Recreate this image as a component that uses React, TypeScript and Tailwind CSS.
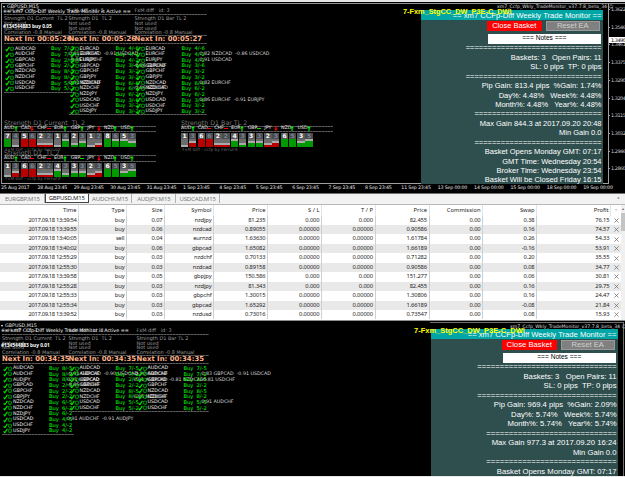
import { clsx } from 'clsx'

type Row = [string, string, string?]

interface Column {
  x: number
  title: string
  next: string
  rows: Row[]
}

const sans = "font-['DejaVu_Sans',sans-serif]"

const topColumns: Column[] = [
  {
    x: 4,
    title: 'Strength D1 Current  TL 2',
    next: 'Next In: 00:05:26',
    rows: [
      ['AUDCAD', '7/-5'],
      ['AUDCHF', '7/-2', '0.81 EURCAD  -0.91 USDCAD'],
      ['GBPCAD', '2/-5', '-0.86 USDCHF'],
      ['GBPCHF', '2/-2'],
      ['NZDCAD', '8/-5'],
      ['NZDCHF', '8/-2'],
      ['USDCAD', '5/-5', '0.91 NZDCHF'],
      ['USDCHF', '5/-2'],
    ],
  },
  {
    x: 68.5,
    title: 'Strength D1  TL 2',
    next: 'Next In: 00:05:26',
    rows: [
      ['EURCAD', '4/-6'],
      ['EURCHF', '4/-2'],
      ['EURJPY', '4/-2'],
      ['GBPCAD', '3/-6', '-0.86 EURCHF'],
      ['GBPCHF', '3/-2'],
      ['GBPJPY', '3/-2'],
      ['NZDCAD', '6/-6'],
      ['NZDCHF', '6/-2', '-0.86 NZDCAD'],
      ['NZDJPY', '6/-2'],
      ['USDCAD', '3/-6'],
      ['USDCHF', '3/-2'],
      ['USDJPY', '3/-2'],
    ],
  },
  {
    x: 134.5,
    title: 'Strength D1 Bar TL 2',
    next: 'Next In: 00:05:27',
    rows: [
      ['EURCAD', '4/-6'],
      ['EURCHF', '4/-2', '0.82 NZDCAD  -0.86 USDCAD'],
      ['EURJPY', '4/-2', '0.91 USDCAD'],
      ['GBPCAD', '3/-6'],
      ['GBPCHF', '3/-2'],
      ['GBPJPY', '3/-2'],
      ['NZDCAD', '6/-6', '0.82 EURCHF'],
      ['NZDCHF', '6/-2'],
      ['NZDJPY', '6/-2'],
      ['USDCAD', '3/-6', '0.86 EURCHF  -0.91 EURJPY'],
      ['USDCHF', '3/-2'],
      ['USDJPY', '3/-2'],
    ],
  },
]

const bottomColumns: Column[] = [
  {
    x: 2,
    title: 'Strength D1 Current  TL 2',
    next: 'Next In: 00:34:35',
    rows: [
      ['AUDCAD', '8/-5'],
      ['AUDCHF', '8/-2', '-0.91 GBPCAD  -0.90 USDCAD'],
      ['AUDJPY', '8/-2', '0.91 USDCAD'],
      ['GBPCAD', '2/-5', '-0.86 USDCHF'],
      ['GBPCHF', '2/-2'],
      ['GBPJPY', '2/-2'],
      ['NZDCAD', '6/-5'],
      ['NZDCHF', '6/-2'],
      ['NZDJPY', '6/-2'],
      ['USDCAD', '4/-5', '0.91 AUDCHF  -0.91 AUDJPY'],
      ['USDCHF', '4/-2'],
      ['USDJPY', '4/-2'],
    ],
  },
  {
    x: 68.5,
    title: 'Strength D1  TL 2',
    next: 'Next In: 00:34:35',
    rows: [
      ['AUDCAD', '7/-5'],
      ['AUDCHF', '7/-2', '-0.90 GBPCAD'],
      ['GBPCAD', '2/-5', '0.91 AUDCAD  -0.81 NZDCAD'],
      ['GBPCHF', '2/-2'],
      ['NZDCAD', '8/-5'],
      ['NZDCHF', '8/-2', '0.85 NZDCHF'],
      ['USDCAD', '5/-5'],
      ['USDCHF', '5/-2'],
    ],
  },
  {
    x: 136.5,
    title: 'Strength D1 Bar TL 2',
    next: 'Next In: 00:34:35',
    rows: [
      ['AUDCAD', '7/-5'],
      ['AUDCHF', '7/-2', '0.83 GBPCAD  -0.91 USDCAD'],
      ['GBPCAD', '2/-5', '-0.81 USDCHF'],
      ['GBPCHF', '2/-2'],
      ['NZDCAD', '8/-5'],
      ['NZDCHF', '8/-2'],
      ['USDCAD', '5/-5', '0.91 AUDCHF'],
      ['USDCHF', '5/-2'],
    ],
  },
]

function Dashes() {
  return <div className="h-px w-full bg-[repeating-linear-gradient(90deg,#5c5c5c_0_2px,#3a3a3a_2px_3px)]" />
}

function BasketColumn({ col }: { col: Column }) {
  return (
    <div
      className={clsx('absolute top-0 w-[72px] whitespace-pre text-[4.95px] leading-none text-[#9a9a9a]', sans)}
      style={{ left: col.x }}
    >
      <div className="h-[6px]">FxM diff   id: 3</div>
      <Dashes />
      <div className="mt-[1px] flex h-[5.4px] items-center">{col.title}</div>
      <div className="flex h-[4.7px] items-center">Not used</div>
      <div className="flex h-[4.5px] items-center">Not used</div>
      <div className="flex h-[4.6px] items-center">Correlation -0.8 Manual</div>
      <Dashes />
      <div className="flex h-[7px] items-center text-[6.9px] font-bold text-[#ffb08a]">{col.next}</div>
      <Dashes />
      <div className="h-[2px]" />
      {col.rows.map(([pair, score, corr]) => (
        <div key={pair} className="flex h-[5.7px] items-center">
          <svg viewBox="0 0 10 6" className="ml-[1px] h-[5.7px] w-[10px] shrink-0" fill="none" stroke="#00e400">
            <path d="M0.4 3.6 1.6 5 4.4 0.8" strokeWidth="1.3" />
            <rect x="5.4" y="1.3" width="3.4" height="3.4" rx="1" strokeWidth="0.7" />
            <path d="M6.5 3.4h1.3" strokeWidth="0.5" />
          </svg>
          <span className="w-[36px] shrink-0 text-[4.75px] text-[#f4f4f4]">{pair}</span>
          <span className="w-[13px] shrink-0 text-[5.2px] text-[#00ff00]">Buy</span>
          <span className="w-[5px] shrink-0 text-[5.2px] text-[#00ff00]">{score}</span>
          {corr && <span className="text-[4.75px] text-[#d8d8d8]">{corr}</span>}
        </div>
      ))}
      <Dashes />
    </div>
  )
}

const currencies = ['AUD', 'CAD', 'CHF', 'EUR', 'GBP', 'JPY', 'NZD', 'USD']

// each currency: [value, bars, previous value, bars], negative bars are drawn red
interface Strength {
  title: string
  values: number[][]
  trend: string
}

const current: Strength = {
  title: 'Strength D1 Current  TL 2',
  values: [
    [7, 4, 4, 0], [5, -4, 6, -4], [2, -1, 2, -1], [1, 0, 4, 3],
    [2, 1, 3, 2], [1, 0, 2, -1], [8, 4, 6, 3], [5, 3, 3, 2],
  ],
  trend: 'UDFUUDUU',
}
const dailyValues = [
  [1, 0, 3, -2], [6, -4, 6, -4], [2, -1, 2, -1], [4, 3, 3, 1],
  [3, 2, 3, 2], [2, -1, 3, -2], [6, 4, 5, 4], [3, 2, 5, 3],
]
const daily: Strength = { title: 'Strength D1  TL 2', values: dailyValues, trend: 'UFFUGDUU' }
const bar: Strength = { title: 'Strength D1 Bar TL 2', values: dailyValues, trend: 'UFFUGDUU' }

function Trend({ kind }: { kind: string }) {
  if (kind === 'F' || kind === 'G') {
    return <span className={clsx('h-[1.4px] w-[4px]', kind === 'F' ? 'bg-[#ff0000]' : 'bg-[#00e000]')} />
  }
  return (
    <svg viewBox="0 0 4 5" className={clsx('h-[5px] w-[4px]', kind === 'D' && 'rotate-180')}>
      <path d="M2 0 4 2.3H2.6V5H1.4V2.3H0Z" fill={kind === 'U' ? '#00f000' : '#ff0000'} />
    </svg>
  )
}

function Cell({ value, bars, dim }: { value: number; bars: number; dim?: boolean }) {
  const lit = Math.abs(bars)
  return (
    <div className="flex w-[7.3px] flex-col bg-[#303030]">
      <div
        className={clsx(
          'flex h-[6px] items-center justify-center text-[6px] font-bold leading-none',
          dim ? 'bg-[#484c50] text-[#7c8490]' : 'bg-[#5a5a5a] text-white',
        )}
      >
        {value}
      </div>
      {[4, 3, 2, 1].map((level) => (
        <div
          key={level}
          className={clsx(
            'h-[2.1px]',
            level === lit + 1 ? 'bg-[#aaaaaa]' : level > lit ? 'bg-[#6c6c6c]' : bars < 0 ? 'bg-[#b80000]' : 'bg-[#009a00]',
          )}
        />
      ))}
    </div>
  )
}

function StrengthMeter({ data, className }: { data: Strength; className: string }) {
  return (
    <div className={clsx('absolute w-[152px] whitespace-pre leading-none', sans, className)}>
      <div className="h-[5.5px] text-[6.3px] text-[#787878]">{data.title}</div>
      <Dashes />
      <div className="flex h-[4.5px] text-[4.7px] text-[#e4e4e4]">
        {currencies.map((c, i) => (
          <div key={c} className="flex w-[16.67px] shrink-0 items-center">
            <span className="w-[9.5px]">{c}</span>
            <Trend kind={data.trend[i]} />
          </div>
        ))}
      </div>
      <Dashes />
      <div className="mt-[1px] flex gap-[1.37px]">
        {data.values.map(([now, nowBars, prev, prevBars], i) => (
          <div key={i} className="flex gap-[0.7px]">
            <Cell value={now} bars={nowBars} />
            <Cell value={prev} bars={prevBars} dim />
          </div>
        ))}
      </div>
      <div className="mt-[0.5px] text-[4.3px] text-[#666]"> FxM Diff - ccfp by FerruFX</div>
    </div>
  )
}

interface MonitorProps {
  gain: string[]
  max: string
  tall?: boolean
}

function Monitor({ gain, max, tall }: MonitorProps) {
  const long = '='.repeat(31)
  const short = '='.repeat(29)
  const lines = [
    long,
    'Baskets: 3   Open Pairs: 11',
    'SL: 0 pips  TP: 0 pips',
    long,
    ...gain,
    short,
    max,
    'Min Gain 0.0',
    short,
    'Basket Opens Monday GMT: 07:17',
  ]
  if (tall) {
    lines.push('GMT Time: Wednesday 20:54', 'Broker Time: Wednesday 23:54', 'Basket Will be Closed Friday 16:15')
  }

  return (
    <div
      className={clsx(
        "flex shrink-0 flex-col overflow-hidden whitespace-pre bg-[#2f4f4f] font-['Liberation_Sans',sans-serif] leading-none text-white",
        tall ? 'h-[174px] w-[182px] text-[7.5px]' : 'h-[149px] w-[187px] text-[7.7px]',
      )}
    >
      <div className="flex h-[9.5px] shrink-0 items-center justify-end bg-[#00a5a5] pr-[1.5px] pt-[2px] text-[7.65px]">
        == xm7 CCFp-Diff Weekly Trade Monitor ==
      </div>
      <div className="mt-[1px] flex shrink-0 justify-end gap-[4px] pr-[3px]">
        <div className="flex h-[10px] w-[54.5px] items-center justify-center bg-[#ff0000]">Close Basket</div>
        <div className="flex h-[10px] w-[54.5px] items-center justify-center border border-[#9a9a9a] bg-[#808080] text-[#d0d0d0]">
          Reset EA
        </div>
      </div>
      <div className="mr-[2px] mt-[3px] flex h-[10px] w-[113.5px] shrink-0 items-center justify-center self-end bg-white text-[6.6px] text-black">
        === Notes ===
      </div>
      <div className="shrink-0 pr-[1.5px]">
        {lines.map((text, i) => (
          <div key={i} className={clsx('flex items-center justify-end', tall ? 'h-[9.43px]' : 'h-[9.5px]')}>
            {text}
          </div>
        ))}
      </div>
    </div>
  )
}

interface ChartLabelsProps {
  ticket: string
  className: string
  eaName: string
  tag: string
}

// Text objects the terminal paints over every chart window
function ChartLabels({ ticket, className, eaName, tag }: ChartLabelsProps) {
  return (
    <>
      <div className={clsx('absolute whitespace-pre text-[4.8px] leading-none text-[#e8e8e8]', sans, className)}>
        <div className="flex h-[4.8px] items-center gap-[2px]">
          <span className="size-0 border-x-[1.5px] border-t-[2px] border-x-transparent border-t-white" />
          GBPUSD,M15
        </div>
        <div className="flex h-[5px] items-center text-white">== xm7 CCfp-Diff Weekly Trade Monitor is Active ==</div>
        <div className="mt-[9.5px] flex h-[5px] items-center font-['Open_Sans',sans-serif] text-[4.8px] font-bold text-white">
          #134544883 buy {ticket}
        </div>
      </div>
      <div className={clsx('absolute whitespace-pre text-[4.65px] leading-none text-[#d8d8d8]', sans, eaName)}>
        xm7_Ccfp_Wkly_TradeMonitor_v37.7.8_beta_34 ☺
      </div>
      <div
        className={clsx(
          "absolute whitespace-pre font-['Liberation_Sans',sans-serif] font-bold leading-none text-[#ffff00]",
          tag,
        )}
      >
        7-Fxm_StgCC_DW_P3E-C_DWl
      </div>
    </>
  )
}

const times = [
  '25 Aug 2017', '28 Aug 23:45', '29 Aug 23:45', '30 Aug 23:45', '31 Aug 23:45', '1 Sep 23:45',
  '4 Sep 23:45', '5 Sep 23:45', '6 Sep 23:45', '7 Sep 23:45', '8 Sep 23:45', '11 Sep 23:45',
  '13 Sep 00:00', '14 Sep 00:00', '15 Sep 00:00', '18 Sep 00:00', '19 Sep 00:00',
]

const prices = ['1.3622', '1.3546', '1.3461', '1.3375', '1.3290', '1.3204', '1.3115', '1.3032', '1.2946', '1.2860']

function TopChart() {
  return (
    <section className="relative flex h-[194px] shrink-0 flex-col overflow-hidden border-b border-[#707070] bg-black">
      <div className="h-[2px] shrink-0 bg-[#e4e6e8]" />
      <div className="ml-px mt-px flex h-[181px] shrink-0 border-l border-t border-[#909090]">
        <div className="relative flex w-[607px] shrink-0 justify-end border-b border-r border-[#a0a0a0] pr-[5px] pt-[6px]">
          <Monitor
            tall
            gain={['Pip Gain: 813.4 pips  %Gain: 1.74%', 'Day%: 4.48%   Week%: 4.48%', 'Month%: 4.48%   Year%: 4.48%']}
            max="Max Gain 844.3 at 2017.09.20 20:48"
          />
        </div>
        <div className={clsx('relative flex flex-col pt-[3px] text-[4.9px] leading-none text-[#d0d0d0]', sans)}>
          {prices.map((p) => (
            <div key={p} className="flex h-[18.6px] gap-[1px]">
              <span className="mt-[2px] h-px w-[1px] bg-[#a0a0a0]" />
              <span className="tracking-[-0.45px]">{p}</span>
            </div>
          ))}
          <div className="absolute left-0 top-[33px] flex h-[6px] w-[18px] items-center bg-white pl-[2px] tracking-[-0.45px] text-black">
            1.3490
          </div>
        </div>
      </div>
      <div className={clsx('flex pl-[1px] pt-[2px] text-[4.7px] leading-none text-[#e0e0e0]', sans)}>
        {times.map((t) => (
          <span key={t} className="w-[36.4px] shrink-0 whitespace-nowrap tracking-[-0.15px]">
            {t}
          </span>
        ))}
      </div>
      <div className="absolute left-0 top-[8px]">
        {topColumns.map((c) => (
          <BasketColumn key={c.x} col={c} />
        ))}
      </div>
      <StrengthMeter data={current} className="left-[4px] top-[120px]" />
      <StrengthMeter data={daily} className="left-[4px] top-[149.5px]" />
      <StrengthMeter data={bar} className="left-[181px] top-[120px]" />
      <ChartLabels
        ticket="0.05"
        className="left-[3px] top-[5px]"
        eaName="left-[497px] top-[4.5px]"
        tag="left-[403px] top-[8px] text-[7.35px]"
      />
    </section>
  )
}

function BottomChart() {
  return (
    <section className="relative flex h-[156px] shrink-0 justify-end overflow-hidden border-t border-[#909090] bg-black">
      <div className="mr-[1px] mt-[1px] flex w-[194px] justify-end border-r border-t border-[#707070] pr-[5px] pt-[6px]">
        <Monitor
          gain={['Pip Gain: 969.4 pips  %Gain: 2.09%', 'Day%: 5.74%   Week%: 5.74%', 'Month%: 5.74%   Year%: 5.74%']}
          max="Max Gain 977.3 at 2017.09.20 16:24"
        />
      </div>
      <div className="absolute left-0 top-[6.5px]">
        {bottomColumns.map((c) => (
          <BasketColumn key={c.x} col={c} />
        ))}
      </div>
      <ChartLabels
        ticket="0.01"
        className="left-px top-[3px]"
        eaName="left-[510px] top-[3.5px]"
        tag="left-[414px] top-[6px] text-[7.5px]"
      />
    </section>
  )
}

const tabs = ['EURGBP,M15', 'GBPUSD,M15', 'AUDCHF,M15', 'AUDJPY,M15', 'USDCAD,M15']

function Tabs() {
  return (
    <div className="flex h-[11px] shrink-0 items-start border-b border-[#b8b8b8] bg-[#f2f2f2] pl-[1px] text-[6px] leading-none text-[#777]">
      {tabs.map((t) => (
        <div
          key={t}
          className={clsx(
            'flex h-[9px] w-[43.8px] items-center justify-center tracking-[-0.15px]',
            t === 'GBPUSD,M15' ? 'border border-t-0 border-[#444] bg-white text-[#222]' : 'border-r border-[#b0b0b0]',
          )}
        >
          {t}
        </div>
      ))}
      <span className="ml-auto mr-[6px] mt-[2px] text-[4px]">◂</span>
    </div>
  )
}

const headers = ['Time', 'Type', 'Size', 'Symbol', 'Price', 'S / L', 'T / P', 'Price', 'Commission', 'Swap', 'Profit']

const trades = [
  ['2017.09.18 13:39:54', 'buy', '0.07', 'nzdjpy', '81.235', '0.000', '0.000', '82.455', '0.00', '0.38', '76.15'],
  ['2017.09.18 13:39:55', 'buy', '0.06', 'nzdcad', '0.89055', '0.00000', '0.00000', '0.90586', '0.00', '0.16', '74.57'],
  ['2017.09.18 13:40:05', 'sell', '0.04', 'eurnzd', '1.63630', '0.00000', '0.00000', '1.61784', '0.00', '0.26', '54.33'],
  ['2017.09.18 13:40:02', 'buy', '0.06', 'gbpcad', '1.65082', '0.00000', '0.00000', '1.66189', '0.00', '-0.16', '53.91'],
  ['2017.09.18 12:55:29', 'buy', '0.03', 'nzdchf', '0.70133', '0.00000', '0.00000', '0.71282', '0.00', '0.20', '35.55'],
  ['2017.09.18 12:55:30', 'buy', '0.03', 'nzdcad', '0.89158', '0.00000', '0.00000', '0.90586', '0.00', '0.08', '34.77'],
  ['2017.09.18 13:39:58', 'buy', '0.05', 'gbpjpy', '150.586', '0.000', '0.000', '151.277', '0.00', '0.06', '30.81'],
  ['2017.09.18 12:55:28', 'buy', '0.03', 'nzdjpy', '81.343', '0.000', '0.000', '82.455', '0.00', '0.16', '29.75'],
  ['2017.09.18 12:55:33', 'buy', '0.03', 'gbpchf', '1.30015', '0.00000', '0.00000', '1.30806', '0.00', '0.16', '24.47'],
  ['2017.09.18 12:55:34', 'buy', '0.03', 'gbpcad', '1.65292', '0.00000', '0.00000', '1.66189', '0.00', '-0.08', '21.84'],
  ['2017.09.18 13:39:52', 'buy', '0.03', 'nzdusd', '0.73016', '0.00000', '0.00000', '0.73547', '0.00', '0.08', '15.93'],
]

const grid = 'grid grid-cols-[79px_48px_38px_49px_54px_54px_53.5px_54px_53.5px_54px_74px_10px]'

function Cross() {
  return (
    <svg viewBox="0 0 5 5" className="size-[5px] self-center justify-self-center" stroke="#666" strokeWidth="0.7">
      <path d="M0.4 0.4 4.6 4.6M4.6 0.4 0.4 4.6" />
    </svg>
  )
}

function Trades() {
  return (
    <div className="flex h-[115px] shrink-0 bg-white text-[5.8px] leading-none text-[#1e1e1e]">
      <div className="w-[621px]">
        <div className={clsx(grid, 'h-[10.5px]')}>
          {headers.map((h, i) => (
            <div key={i} className="flex items-center justify-end border-r border-[#e4e4e4] pr-[1.5px] pt-[1px]">
              {h}
            </div>
          ))}
          <span className="self-center text-center text-[4px] text-[#888]">▿</span>
        </div>
        {trades.map((row, n) => (
          <div key={n} className={clsx(grid, 'h-[9.46px]', n % 2 === 1 && 'bg-[#e9e9e9]')}>
            {row.map((v, i) => (
              <div
                key={i}
                className={clsx(
                  'flex items-center justify-end pr-[1.5px] pt-[0.5px]',
                  i === 0 ? 'tracking-[-0.32px]' : 'tracking-[-0.13px]',
                  i < 10 && 'border-r border-[#d0d0d0]',
                )}
              >
                {v}
              </div>
            ))}
            <Cross />
          </div>
        ))}
      </div>
      <div className="flex flex-1 flex-col items-center bg-[#f0f0f0] pt-[2px] text-[4px] text-[#666]">
        ▴
        <div className="mt-[2px] h-[18px] w-[4px] bg-[#c4c4c4]" />
      </div>
    </div>
  )
}

export default function App() {
  return (
    <div className="flex h-[477px] w-[625px] flex-col overflow-hidden bg-[#e8e8e8] font-['Noto_Sans',sans-serif]">
      <TopChart />
      <Tabs />
      <Trades />
      <BottomChart />
    </div>
  )
}
